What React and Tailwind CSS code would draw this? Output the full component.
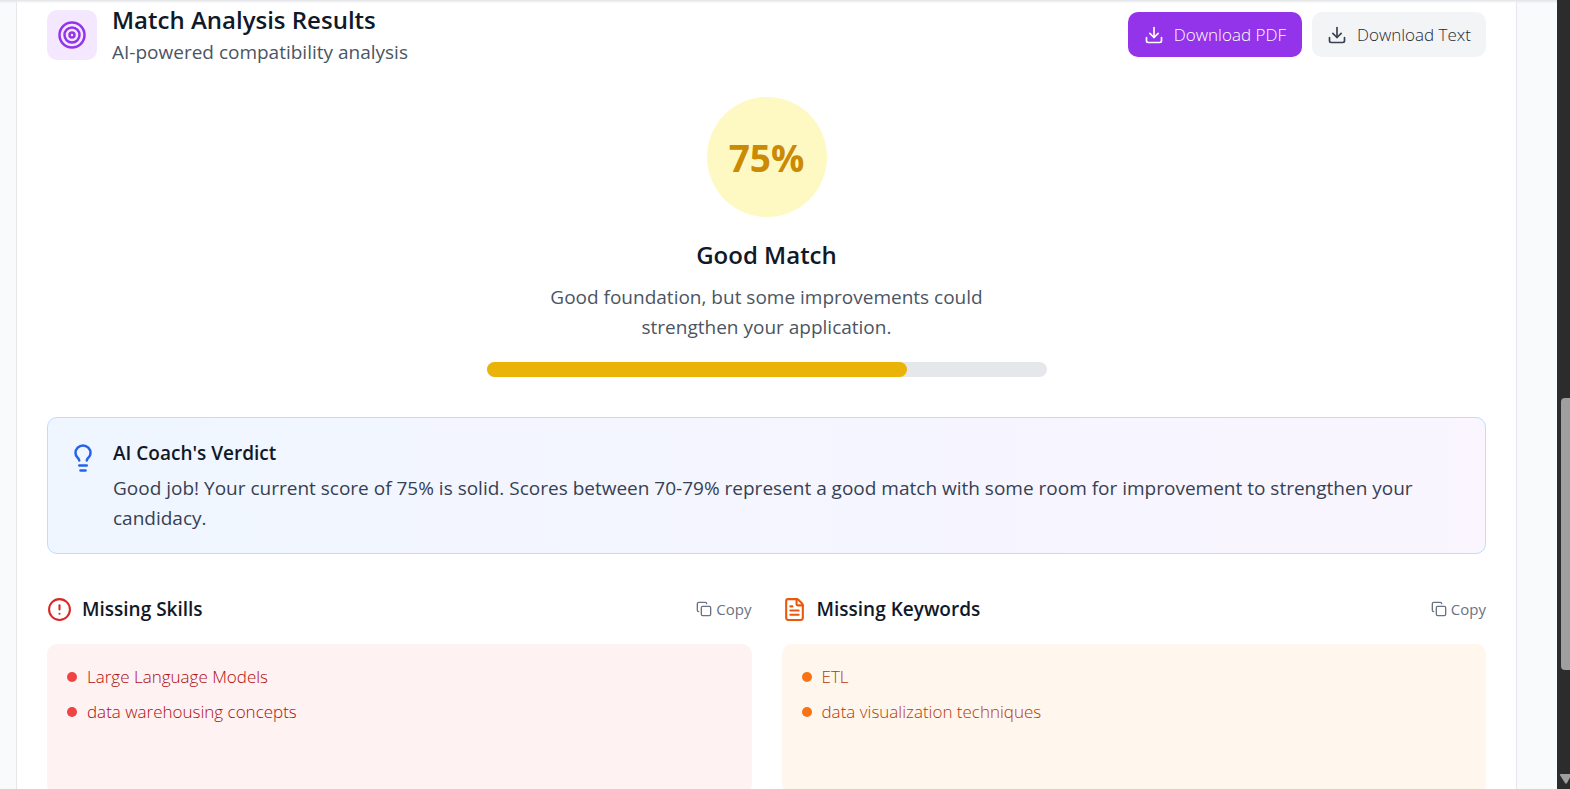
import React from 'react';
import { Target, Download, Lightbulb, CircleAlert, FileText, Copy } from 'lucide-react';

const analysis = {
  score: 75,
  label: 'Good Match',
  description: 'Good foundation, but some improvements could strengthen your application.',
  verdict:
    'Good job! Your current score of 75% is solid. Scores between 70-79% represent a good match with some room for improvement to strengthen your candidacy.',
  missingSkills: ['Large Language Models', 'data warehousing concepts'],
  missingKeywords: ['ETL', 'data visualization techniques'],
};

const copyList = (items) => {
  navigator.clipboard?.writeText(items.join('\n'));
};

const MissingList = ({ title, icon, items, boxClass, dotClass }) => (
  <section>
    <div className="flex items-center justify-between mb-5">
      <div className="flex items-center gap-2.5">
        {icon}
        <h4 className="text-[19px] leading-[30px] font-semibold text-[#111827]">{title}</h4>
      </div>
      <button
        onClick={() => copyList(items)}
        className="flex items-center gap-1 text-[15px] leading-5 text-[#6b7280] hover:text-[#374151]"
      >
        <Copy size={16} />
        Copy
      </button>
    </div>
    <div className={`min-h-[150px] rounded-[10px] p-5 ${boxClass}`}>
      <ul className="space-y-2.5">
        {items.map((item) => (
          <li key={item} className="flex items-center gap-2.5 text-[17px] leading-[25px] font-light">
            <span className={`w-2.5 h-2.5 rounded-full shrink-0 ${dotClass}`} />
            {item}
          </li>
        ))}
      </ul>
    </div>
  </section>
);

const Scrollbar = () => (
  <div className="w-[13px] shrink-0 bg-[#2c2c2c] flex flex-col overflow-hidden pl-1" aria-hidden="true">
    <div className="basis-0 grow-[398]" />
    <div className="basis-0 grow-[272] w-3 rounded-[4px] bg-[#9f9f9f]" />
    <div className="basis-0 grow-[104]" />
    <svg width="12" height="15" viewBox="0 0 12 15" className="-ml-1 pl-px w-4 shrink-0">
      <path d="M1 0h10.500q1 0 .4 1L7.500 9q-1 1.500-2 0L.4 1Q0 0 1 0z" fill="#9f9f9f" />
    </svg>
  </div>
);

const App = () => {
  return (
    <div className="flex h-screen overflow-hidden bg-[#f8fafc] font-['Open_Sans','Noto_Sans',sans-serif]">
      <main className="flex-1 min-w-0 border-t border-[#e5e7eb] shadow-[inset_0_3px_2px_-2px_rgba(0,0,0,0.08)] pl-4 pr-10">
        <div className="min-h-full border-x border-[#e5e7eb] bg-white shadow-[inset_0_3px_2px_-2px_rgba(0,0,0,0.08)] px-[30px] pt-px">
          {/* Header */}
          <div className="flex items-center justify-between mb-[30px]">
            <div className="flex items-center gap-[15px]">
              <div className="w-[50px] h-[50px] rounded-[10px] bg-[#f3e8ff] flex items-center justify-center">
                <Target size={30} className="text-[#9333ea]" />
              </div>
              <div>
                <h2 className="text-[24px] leading-[35px] font-semibold text-[#111827]">Match Analysis Results</h2>
                <p className="text-[19px] leading-[30px] text-[#4b5563]">AI-powered compatibility analysis</p>
              </div>
            </div>
            <div className="flex gap-2.5 text-[17px] leading-[25px] font-light">
              <button className="flex items-center gap-2.5 px-4 py-2.5 rounded-[10px] bg-[#9333ea] text-white hover:bg-[#7e22ce]">
                <Download size={20} />
                Download PDF
              </button>
              <button className="flex items-center gap-2.5 px-[15px] py-2.5 rounded-[10px] bg-[#f3f4f6] text-[#1f2937] hover:bg-[#e5e7eb]">
                <Download size={20} className="text-[#374151]" />
                Download Text
              </button>
            </div>
          </div>

          {/* Score */}
          <div className="max-w-[560px] mx-auto mb-10 text-center">
            <div className="w-[120px] h-[120px] mx-auto mb-5 rounded-full bg-[#fef9c3] flex items-center justify-center">
              <span className="text-[37px] leading-[45px] font-bold text-[#ca8a04]">{analysis.score}%</span>
            </div>
            <h3 className="mb-2.5 text-[24px] leading-[35px] font-semibold text-[#111827]">{analysis.label}</h3>
            <p className="mb-5 px-10 text-[19px] leading-[30px] text-[#4b5563]">{analysis.description}</p>
            <div className="h-[15px] rounded-full bg-[#e5e7eb]">
              <div className="h-full rounded-full bg-[#eab308]" style={{ width: `${analysis.score}%` }} />
            </div>
          </div>

          {/* Verdict */}
          <div className="flex items-start gap-[15px] mb-10 p-5 rounded-[10px] border border-[#bfdbfe] bg-linear-to-r from-[#eff6ff] to-[#faf5ff]">
            <Lightbulb size={30} className="mt-[5px] shrink-0 text-[#2563eb]" />
            <div>
              <h4 className="mb-[5px] text-[19px] leading-[30px] font-semibold text-[#111827]">AI Coach's Verdict</h4>
              <p className="text-[19px] leading-[30px] text-[#374151]">{analysis.verdict}</p>
            </div>
          </div>

          {/* Missing skills / keywords */}
          <div className="grid grid-cols-1 md:grid-cols-2 gap-[30px]">
            <MissingList
              title="Missing Skills"
              icon={<CircleAlert size={25} className="text-[#dc2626]" />}
              items={analysis.missingSkills}
              boxClass="bg-[#fef2f2] text-[#b10c0c]"
              dotClass="bg-[#ef4444]"
            />
            <MissingList
              title="Missing Keywords"
              icon={<FileText size={25} className="text-[#ea580c]" />}
              items={analysis.missingKeywords}
              boxClass="bg-[#fff7ed] text-[#b83606]"
              dotClass="bg-[#f97316]"
            />
          </div>
        </div>
      </main>
      <Scrollbar />
    </div>
  );
};

export default App;
